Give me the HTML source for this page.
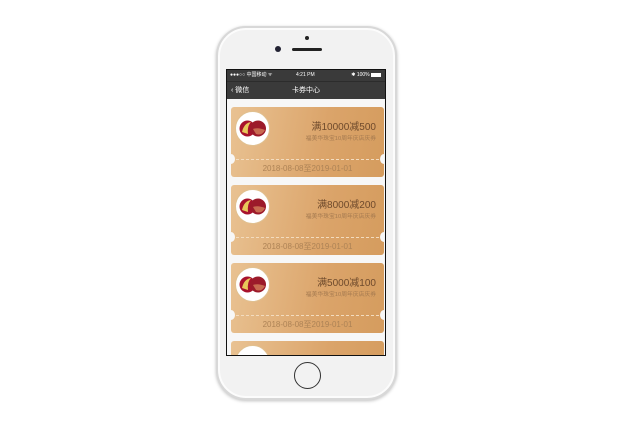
<!DOCTYPE html><html><head><meta charset="utf-8"><style>
*{margin:0;padding:0;box-sizing:border-box}
body{width:630px;height:430px;background:#fff;position:relative;overflow:hidden;font-family:"Liberation Sans","Noto Sans CJK SC",sans-serif}
.phone{position:absolute;left:216px;top:26px;width:181px;height:374px;border-radius:30px;background:#f2f2f2;border:2px solid #d8d8d8;box-shadow:0 1px 3px rgba(0,0,0,.25),inset 0 0 0 2px #fcfcfc}
.screen{position:absolute;left:226px;top:69px;width:160px;height:287px;background:#111;border:1px solid #111;overflow:hidden}
.sb{height:11px;background:#3a3a3a;color:#fff;font-size:5px;line-height:11px;position:relative}
.nav{height:18px;background:#3a3a3a;color:#fff;font-size:7px;line-height:18px;text-align:center;position:relative;border-top:1px solid #2c2c2c}
.content{background:#f7f7f7;height:258px;position:relative}
.card{position:absolute;left:4px;width:153px;height:70px;border-radius:3px;background:linear-gradient(100deg,#e9c292 0%,#dba46a 60%,#d59c5e 100%)}
.card .logo{position:absolute;left:4px;top:4px;width:35px;height:35px;border-radius:50%;background:#fff;border:1px solid #e0c090}
.card .t{position:absolute;right:8px;top:11px;font-size:10px;color:#6e4a2c}
.card .s{position:absolute;right:8px;top:26px;font-size:5.8px;color:#a47a50;white-space:nowrap}
.card .d{position:absolute;left:0;right:0;top:52px;border-top:1px dashed #f3dcbf}
.card .dt{position:absolute;left:0;right:0;top:56px;text-align:center;font-size:8px;color:#ad8356}
.nl,.nr{position:absolute;top:47px;width:8px;height:10px;border-radius:50%;background:#f7f7f7}
.nl{left:-4px}.nr{right:-4px}
</style></head><body>
<div class="phone"></div>
<div style="position:absolute;left:305px;top:36px;width:4px;height:4px;border-radius:50%;background:#222"></div>
<div style="position:absolute;left:275px;top:46px;width:6px;height:6px;border-radius:50%;background:#223"></div>
<div style="position:absolute;left:292px;top:48px;width:30px;height:3px;border-radius:2px;background:#222"></div>
<div style="position:absolute;left:294px;top:362px;width:27px;height:27px;border-radius:50%;border:1.5px solid #333;background:#f2f2f2"></div>
<div class="screen">
<div class="sb"><span style="position:absolute;left:3px">●●●○○ 中国移动 ᯤ</span><span style="position:absolute;left:69px">4:21 PM</span><span style="position:absolute;right:4px">✱ 100% <span style="display:inline-block;width:10px;height:4px;background:#fff;vertical-align:middle"></span></span></div>
<div class="nav"><span style="position:absolute;left:4px">‹ 微信</span>卡券中心</div>
<div class="content">
<div class="card" style="top:8px"><div class="logo"><svg width="33" height="33" viewBox="0 0 33 33"><circle cx="11.5" cy="16.5" r="8" fill="#a8122c"/><circle cx="22" cy="16.5" r="8" fill="#9c1a2a"/><path d="M6 20 Q8 11 15 10 Q11 14 12 22Z" fill="#e8c75a"/><path d="M17 17 Q22 15 29 18 Q26 24 20 22Z" fill="#c86a50"/></svg></div><div class="t">满10000减500</div><div class="s">福美华珠宝10周年庆店庆券</div><div class="d"></div><div class="dt">2018-08-08至2019-01-01</div><div class="nl"></div><div class="nr"></div></div>
<div class="card" style="top:86px"><div class="logo"><svg width="33" height="33" viewBox="0 0 33 33"><circle cx="11.5" cy="16.5" r="8" fill="#a8122c"/><circle cx="22" cy="16.5" r="8" fill="#9c1a2a"/><path d="M6 20 Q8 11 15 10 Q11 14 12 22Z" fill="#e8c75a"/><path d="M17 17 Q22 15 29 18 Q26 24 20 22Z" fill="#c86a50"/></svg></div><div class="t">满8000减200</div><div class="s">福美华珠宝10周年庆店庆券</div><div class="d"></div><div class="dt">2018-08-08至2019-01-01</div><div class="nl"></div><div class="nr"></div></div>
<div class="card" style="top:164px"><div class="logo"><svg width="33" height="33" viewBox="0 0 33 33"><circle cx="11.5" cy="16.5" r="8" fill="#a8122c"/><circle cx="22" cy="16.5" r="8" fill="#9c1a2a"/><path d="M6 20 Q8 11 15 10 Q11 14 12 22Z" fill="#e8c75a"/><path d="M17 17 Q22 15 29 18 Q26 24 20 22Z" fill="#c86a50"/></svg></div><div class="t">满5000减100</div><div class="s">福美华珠宝10周年庆店庆券</div><div class="d"></div><div class="dt">2018-08-08至2019-01-01</div><div class="nl"></div><div class="nr"></div></div>
<div class="card" style="top:242px"><div class="logo"></div><div class="t">满3000减50</div></div>
</div></div>
</body></html>
